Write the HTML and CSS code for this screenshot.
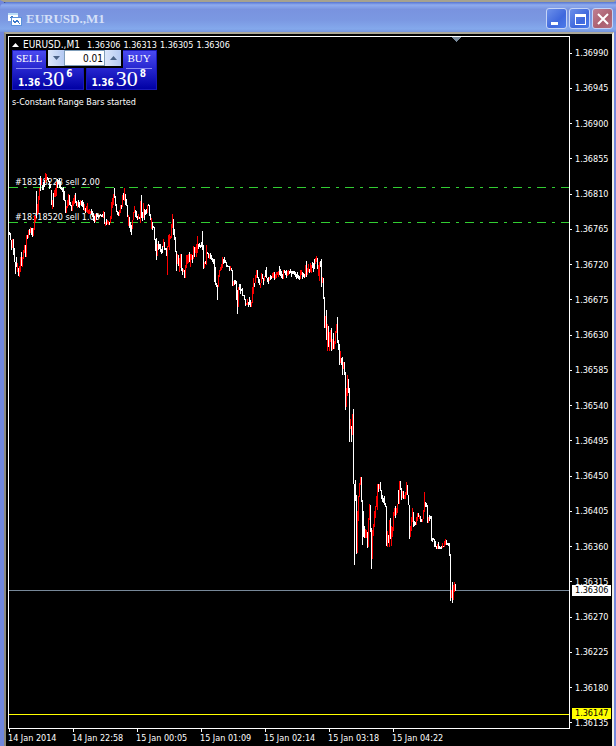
FILE: index.html
```html
<!DOCTYPE html>
<html lang="en">
<head>
    <meta charset="UTF-8">
    <meta name="viewport" content="width=device-width, initial-scale=1.0">
    <title>EURUSD.,M1</title>
    <link rel="stylesheet" href="styles.css">
</head>
<body>
    <div class="window">
        <header class="titlebar">
            <svg class="app-icon" width="14" height="14" viewBox="0 0 14 14" shape-rendering="crispEdges">
                <rect x="0" y="1" width="10" height="8" fill="#fff"/>
                <rect x="0" y="1" width="10" height="2" fill="#b9dcf6"/>
                <path d="M2 6l2-2 1 2 2-1" fill="none" stroke="#3c79c8"/>
                <rect x="3" y="5" width="11" height="9" fill="#5b93dc"/>
                <rect x="4" y="6" width="9" height="7" fill="#fff"/>
                <path d="M5 8l2 3 2-3 2 3h1" fill="none" stroke="#3c79c8"/>
            </svg>
            <h1 class="title">EURUSD.,M1</h1>
            <div class="window-buttons">
                <button class="win-btn" aria-label="Minimize">
                    <svg width="16" height="16" viewBox="0 0 16 16"><rect x="2" y="11" width="7" height="3" fill="#fff"/></svg>
                </button>
                <button class="win-btn" aria-label="Maximize">
                    <svg width="16" height="16" viewBox="0 0 16 16" shape-rendering="crispEdges"><path d="M3 3h11v11H3zM4 6v7h9V6z" fill="#fff" fill-rule="evenodd"/></svg>
                </button>
                <button class="win-btn win-close" aria-label="Close">
                    <svg width="16" height="16" viewBox="0 0 16 16"><path d="M3 3l10 10M13 3L3 13" stroke="#fff" stroke-width="2"/></svg>
                </button>
            </div>
        </header>

        <main class="chart">
            <section class="plot">
                <svg class="bars" viewBox="9 37 560 691" preserveAspectRatio="none" shape-rendering="crispEdges">
                    <path d="M451 37h10l-5 5z" fill="#778899"/>
                    <path class="order-line" d="M9 187.5H569"/>
                    <path class="order-line" d="M9 222.5H569"/>
                    <path d="M9 590.5H569" stroke="#778899"/>
                    <path d="M9 714.5H569" stroke="#ffff00"/>
                    <text class="order-text" x="15" y="185">#18318223 sell 2.00</text>
                    <text class="order-text" x="15" y="220">#18318520 sell 1.00</text>
                    <path id="downBars" stroke="#fff"/>
                    <path id="upBars" stroke="#f00"/>
                </svg>

                <div class="overlay">
                    <div class="quote">
                        <svg width="7" height="4" viewBox="0 0 7 4"><path d="M0 4l3.500-4L7 4z" fill="#fff"/></svg>
                        <span class="symbol">EURUSD.,M1</span>
                        <span>1.36306</span>
                        <span>1.36313</span>
                        <span>1.36305</span>
                        <span>1.36306</span>
                    </div>
                    <div class="trade">
                        <button class="deal">
                            <span class="side">SELL</span>
                            <span class="price"><b>1.36</b><span class="big">30</span><b class="pip">6</b></span>
                        </button>
                        <button class="deal deal-buy">
                            <span class="side">BUY</span>
                            <span class="price"><b>1.36</b><span class="big">30</span><b class="pip">8</b></span>
                        </button>
                        <div class="volume">
                            <button class="step" aria-label="Decrease volume">
                                <svg width="7" height="4" viewBox="0 0 7 4"><path d="M0 0h7L3.500 4z" fill="#4a6287"/></svg>
                            </button>
                            <input class="lots" type="text" value="0.01" aria-label="Volume">
                            <button class="step" aria-label="Increase volume">
                                <svg width="7" height="4" viewBox="0 0 7 4"><path d="M0 4l3.500-4L7 4z" fill="#4a6287"/></svg>
                            </button>
                        </div>
                    </div>
                    <p class="comment">s-Constant Range Bars started</p>
                </div>
            </section>

            <aside class="prices">
                <ul class="price-list">
                    <li>1.36990</li>
                    <li>1.36945</li>
                    <li>1.36900</li>
                    <li>1.36855</li>
                    <li>1.36810</li>
                    <li>1.36765</li>
                    <li>1.36720</li>
                    <li>1.36675</li>
                    <li>1.36630</li>
                    <li>1.36585</li>
                    <li>1.36540</li>
                    <li>1.36495</li>
                    <li>1.36450</li>
                    <li>1.36405</li>
                    <li>1.36360</li>
                    <li>1.36315</li>
                    <li>1.36270</li>
                    <li>1.36225</li>
                    <li>1.36180</li>
                    <li>1.36135</li>
                </ul>
                <span class="tag tag-bid">1.36306</span>
                <span class="tag tag-order">1.36147</span>
            </aside>

            <ul class="times">
                <li>14 Jan 2014</li>
                <li>14 Jan 22:58</li>
                <li>15 Jan 00:05</li>
                <li>15 Jan 01:09</li>
                <li>15 Jan 02:14</li>
                <li>15 Jan 03:18</li>
                <li>15 Jan 04:22</li>
            </ul>
        </main>
    </div>

    <script>
        // One entry per bar: w = down, r = up, then top-bottom
        const bars = `
            w232-235 w233-240 w240-250 r239-248 w239-255 w248-262 w262-274 w257-267 r263-272 w268-276 r266-277
            r257-272 w252-266 r257-267 r250-259 r245-253 w245-257 r235-257 w235-239 r230-238 w229-235 r227-233
            w228-235 w228-237 r228-236 r215-230 r216-222 w191-218 r204-215 r196-213 r188-200 w176-191 r178-185
            w185-190 w182-190 w180-187 r173-183 r174-180 w177-180 w178-182 w181-189 w184-188 w190-205 r200-209
            w193-207 r190-197 r188-197 r182-196 w179-188 w180-184 w179-188 w182-189 w187-190 w188-192 w187-200
            w191-201 w200-213 r206-213 r200-208 r194-206 w195-205 w202-206 w205-211 r201-211 r198-206 r195-204
            w193-203 w201-206 r202-208 w200-207 w202-208 r200-205 w201-206 w200-207 w202-210 r204-211 w208-213
            r206-212 r203-213 r210-214 r209-214 r211-214 w209-215 w211-217 w213-221 w216-223 r214-222 w213-220
            w214-217 w215-218 w215-217 w214-216 w215-217 w214-217 r211-218 w212-224 r222-226 w219-225 r220-224
            r221-225 w222-225 r216-223 r202-219 r198-208 r194-205 w188-198 w196-206 w204-212 w211-215 w212-216
            r210-216 r205-213 w205-209 r195-207 w193-200 r188-201 w194-205 w199-206 w205-217 r215-226 w217-228
            w222-232 w225-235 r220-229 r212-220 r206-213 w210-217 w211-218 w216-220 r214-219 w217-219 r201-223
            w195-218 w212-221 r203-218 w209-220 w210-215 w209-214 r205-213 w204-206 w205-216 w214-220 r218-229
            w222-230 w226-228 w227-240 w239-251 w238-260 r244-256 w241-250 w244-249 w244-252 w249-254 w246-253
            r239-247 w242-250 w248-250 w248-256 r246-275 r235-247 r234-250 r236-239 r224-238 r214-228 w219-235
            w229-240 w237-252 w251-271 r254-264 w255-266 r258-272 r254-268 w254-271 w268-275 r269-272 w270-278
            r265-278 r255-268 r255-264 r254-263 w252-262 r254-267 r254-260 w255-263 r246-259 w247-257 r247-253
            r244-257 r236-253 w244-249 w243-247 w245-248 w242-247 w231-250 w245-269 r262-268 w261-264 r245-265
            w252-254 w253-258 r254-259 w253-259 w255-260 w258-262 w259-264 w259-282 w267-285 w283-287 w285-300
            r275-287 r270-277 r267-271 r264-270 r257-268 w259-264 w257-263 w260-263 w262-267 w265-267 w266-267
            w266-271 r266-270 w268-271 w270-286 r281-286 w280-285 w280-284 w281-300 w290-314 r287-307 w284-290
            w284-294 w289-291 w288-296 w295-296 w295-300 w299-306 r303-305 r299-305 w302-307 w297-305 w300-307
            r302-307 r287-303 r278-294 w283-287 r275-283 r270-278 w270-278 w277-283 w279-285 r283-288 r273-283
            w274-279 w278-285 r276-281 w270-277 w267-278 w278-282 w277-284 r277-281 w275-280 w276-279 r273-278
            r272-278 w272-280 r274-279 r272-278 r272-275 r271-277 w266-275 w269-276 w271-278 w274-279 r270-279
            w270-273 w271-275 w270-278 r271-276 r270-275 w271-274 w269-273 w271-277 w271-274 w271-274 w271-275
            w272-277 w274-279 w272-278 w275-279 w276-280 r270-279 r270-275 w272-279 w273-277 w274-278 r265-277
            w261-277 r268-275 r264-272 w269-273 r263-272 r265-273 w262-268 w263-272 w259-269 r258-264 r256-262
            w258-269 r265-276 r262-281 w261-267 w259-287 r277-283 w278-299 w297-328 r316-328 w310-340 r324-351
            w326-347 r332-351 r330-342 w328-351 r339-350 w333-349 r341-349 r331-344 r324-333 w317-343 w340-350
            w344-365 r351-363 w358-365 w357-375 r362-369 w362-375 w372-410 r388-407 r375-396 w379-393 w388-442
            r419-429 w426-442 r414-435 w409-484 w484-565 w480-501 w495-554 r511-553 r496-521 r483-497 r477-485
            w477-502 w500-545 w511-537 w526-538 r529-538 r530-538 w532-548 r518-547 r504-520 w505-532 w528-569
            r530-559 r524-536 r511-527 r506-518 r496-507 r484-510 w484-492 r484-489 w482-491 w490-499 w495-502
            w498-503 w496-505 w503-507 w506-546 r531-547 w535-543 r520-547 w518-539 r526-546 r527-537 r512-531
            r508-516 w506-518 r508-515 r504-513 w490-504 r481-504 w481-490 w488-500 r491-498 w491-499 r495-499
            r492-499 r482-495 w485-495 w495-505 w505-539 r526-537 r517-531 r508-522 w512-527 w521-526 w522-525
            r517-525 r513-521 w513-517 r515-519 w516-522 w519-522 r519-522 r510-519 r492-512 w502-507 w503-507
            w505-523 r517-523 w515-521 w516-519 w516-541 w538-542 w538-540 w539-547 w541-547 w546-549 r544-549
            w542-549 w546-549 w547-549 w546-549 r543-548 w546-547 r541-547 r539-545 w540-545 w543-545 w543-546
            w543-556 w554-601 r590-598 w582-603 r585-600 r582-592 w584-591`.trim().split(/\s+/);

        const paths = { w: '', r: '' };
        const lastX = 455;
        bars.forEach((bar, i) => {
            const x = lastX - bars.length + 1 + i + 0.5;
            const [top, bottom] = bar.slice(1).split('-');
            paths[bar[0]] += `M${x} ${top}V${bottom}`;
        });
        document.getElementById('downBars').setAttribute('d', paths.w);
        document.getElementById('upBars').setAttribute('d', paths.r);
    </script>
</body>
</html>
```
FILE: styles.css
```css
* {
    box-sizing: border-box;
}
body {
    margin: 0;
    background-color: #000;
    color: #fff;
    font-family: "DejaVu Sans Condensed", "DejaVu Sans", sans-serif;
    font-size: 9px;
    line-height: 12px;
}
ul {
    list-style: none;
    margin: 0;
    padding: 0;
}
button {
    border: none;
    padding: 0;
    margin: 0;
    color: #fff;
    font-family: inherit;
    cursor: pointer;
}
.window {
    display: flex;
    flex-direction: column;
    height: 100vh;
    border-top: 2px solid #a5a18f;
    border-left: 4px solid #7086dc;
    border-right: 2px solid #7488dc;
}
.titlebar {
    display: flex;
    align-items: center;
    flex: none;
    height: 30px;
    margin: 0 -2px 0 -4px;
    padding: 3px 3px 0 8px;
    border-top-left-radius: 6px;
    background: linear-gradient(#5675d2, #8eabee 10%, #7993df 25%, #7b98e2 60%, #84a9ec 90%, #7593dc);
}
.title {
    flex: 1;
    margin: 0 0 0 4px;
    color: #d5e0f8;
    font-family: "Liberation Serif", serif;
    font-size: 13px;
    line-height: 16px;
}
.window-buttons {
    display: flex;
    gap: 2px;
}
.win-btn {
    display: flex;
    align-items: center;
    justify-content: center;
    width: 21px;
    height: 21px;
    border: 1px solid #c5d4f7;
    border-radius: 3px;
    background: linear-gradient(135deg, #6c90ea, #3f68dd 60%, #4b7bea);
}
.win-close {
    background: linear-gradient(135deg, #c07f92, #ab6070 60%, #b56f80);
}
.chart {
    display: grid;
    grid-template-columns: 1fr 42px;
    grid-template-rows: 1fr 17px;
    flex: 1;
    min-height: 0;
    padding: 2px 0 0 2px;
    border-top: 2px solid #aca899;
    border-left: 2px solid #8b887c;
    border-right: 2px solid #f1efe2;
    background-color: #000;
}
.plot {
    position: relative;
    min-height: 0;
    border: 1px solid #fff;
}
.bars {
    display: block;
    position: absolute;
    width: 100%;
    height: 100%;
}
.order-line {
    stroke: #32cd32;
    stroke-dasharray: 9 6 3 6;
}
.order-text {
    fill: #fff;
    font-size: 9px;
}
.overlay {
    position: relative;
    padding: 2px 0 0 3px;
}
.quote {
    display: flex;
    align-items: center;
    gap: 3px;
    height: 11px;
}
.symbol {
    margin: 0 4px 0 1px;
    font-size: 10px;
}
.trade {
    position: relative;
    display: flex;
    gap: 2px;
    width: 145px;
}
.deal {
    flex: 1;
    display: flex;
    flex-direction: column;
    height: 40px;
    padding: 0 4px 0 3px;
    border: 1px solid #1a1ab8;
    background: linear-gradient(#4a4af0, #2424cc 50%, #0000a4);
}
.side {
    width: 26px;
    height: 18px;
    border-bottom: 1px solid #8c8cf4;
    font-family: "Liberation Serif", serif;
    font-size: 11px;
    line-height: 15px;
    text-align: left;
}
.deal-buy .side {
    align-self: flex-end;
    text-align: center;
}
.price {
    display: flex;
    align-items: flex-end;
    gap: 2px;
    height: 20px;
    padding-left: 2px;
    font-size: 10px;
    line-height: 12px;
}
.big {
    font-family: "Liberation Serif", serif;
    font-size: 22px;
    line-height: 20px;
}
.pip {
    align-self: flex-start;
    line-height: 10px;
}
.volume {
    position: absolute;
    top: 0;
    left: 34px;
    display: flex;
    width: 77px;
    height: 18px;
    border: solid #000;
    border-width: 0 2px 2px;
}
.step {
    display: flex;
    align-items: center;
    justify-content: center;
    width: 16px;
    background: linear-gradient(90deg, #dce7fb, #b4c9f2);
}
.lots {
    flex: 1;
    min-width: 0;
    padding: 0 1px;
    border: 1px solid #7f9db9;
    background-color: #fff;
    color: #000;
    font-family: inherit;
    font-size: 10px;
    text-align: right;
}
.comment {
    margin: 6px 0 0;
}
.prices {
    position: relative;
    min-height: 0;
}
.price-list {
    display: flex;
    flex-direction: column;
    justify-content: space-between;
    height: 100%;
    padding-top: 11px;
}
.price-list li {
    display: flex;
    align-items: center;
    gap: 3px;
}
.price-list li::before {
    content: "";
    width: 2px;
    height: 1px;
    background-color: #fff;
}
.tag {
    position: absolute;
    left: 2px;
    right: 1px;
    padding-left: 3px;
    line-height: 11px;
    color: #000;
}
.tag-bid {
    top: 79.2%;
    background-color: #fff;
}
.tag-order {
    top: 97%;
    background-color: #ff0;
}
.times {
    grid-column: 1 / -1;
    display: grid;
    grid-template-columns: repeat(7, 64px);
}
.times li {
    white-space: nowrap;
}
.times li::before {
    content: "";
    display: block;
    width: 1px;
    height: 3px;
    margin-left: 1px;
    background-color: #fff;
}
```
